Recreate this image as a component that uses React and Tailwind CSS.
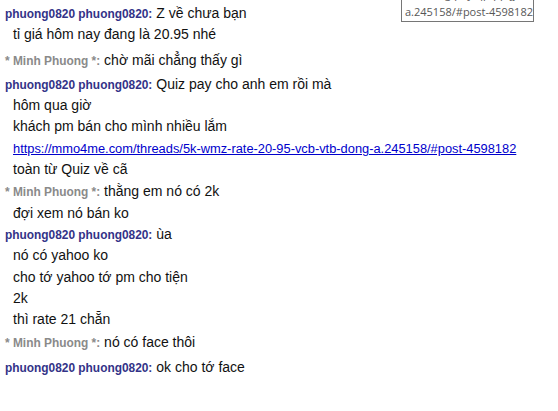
import React from "react";

const NAME = "phuong0820 phuong0820:";
const LINK =
  "https://mmo4me.com/threads/5k-wmz-rate-20-95-vcb-vtb-dong-a.245158/#post-4598182";

// each group: who said it, first line, then extra lines, plus a nudge on top
const groups = [
  { who: "user", mt: 0, lines: ["Z về chưa bạn", "tỉ giá hôm nay đang là 20.95 nhé"] },
  { who: "admin", mt: 4, lines: ["chờ mãi chẳng thấy gì"] },
  {
    who: "user",
    mt: 3,
    lines: [
      "Quiz pay cho anh em rồi mà",
      "hôm qua giờ",
      "khách pm bán cho mình nhiều lắm",
      { link: LINK },
      "toàn từ Quiz về cã",
    ],
  },
  { who: "admin", mt: 1, lines: ["thằng em nó có 2k", "đợi xem nó bán ko"] },
  {
    who: "user",
    mt: 0,
    lines: ["ùa", "nó có yahoo ko", "cho tớ yahoo tớ pm cho tiện", "2k", "thì rate 21 chẵn"],
  },
  { who: "admin", mt: 2, lines: ["nó có face thôi"] },
  { who: "user", mt: 3, lines: ["ok cho tớ face"] },
];

function Speaker({ who }) {
  if (who === "admin") {
    return (
      <span className="font-bold text-[11.9px] text-[#8a8a8a] mr-[4px]">* Minh Phuong *:</span>
    );
  }
  return <span className="font-bold text-[11.9px] text-[#333388] mr-[4px]">{NAME}</span>;
}

function Line({ item }) {
  if (typeof item === "object") {
    return (
      <a href="#" className="text-[12.85px] text-[#0000cc] underline">
        {item.link}
      </a>
    );
  }
  return <span>{item}</span>;
}

export default function App() {
  return (
    <div
      className="relative w-[558px] h-[411px] bg-white overflow-hidden text-[14px] text-[#111]"
      style={{ fontFamily: "Arial, 'Liberation Sans', sans-serif" }}
    >
      <div className="flex flex-col pt-[3px]">
        {groups.map((g, gi) => (
          <div key={gi} className="flex flex-col" style={{ marginTop: g.mt }}>
            <div className="h-[21.3px] leading-[21px] pl-[5px] whitespace-nowrap">
              <Speaker who={g.who} />
              <Line item={g.lines[0]} />
            </div>
            {g.lines.slice(1).map((l, li) => (
              <div key={li} className="h-[21.3px] leading-[21px] pl-[13px] whitespace-nowrap">
                <Line item={l} />
              </div>
            ))}
          </div>
        ))}
      </div>

      {/* link tooltip, top cut off by the window */}
      <div
        className="absolute left-[401px] top-[-15px] w-[133px] h-[37px] border border-[#767676] bg-white px-[3px] text-[11px] leading-[16px] text-[#575757] overflow-hidden"
        style={{ fontFamily: "'Open Sans', 'Noto Sans', sans-serif" }}
      >
        <div className="whitespace-nowrap">vtb-dong-pay-qp-pp-jj</div>
        <div className="whitespace-nowrap mt-[2px]">a.245158/#post-4598182</div>
      </div>
    </div>
  );
}
